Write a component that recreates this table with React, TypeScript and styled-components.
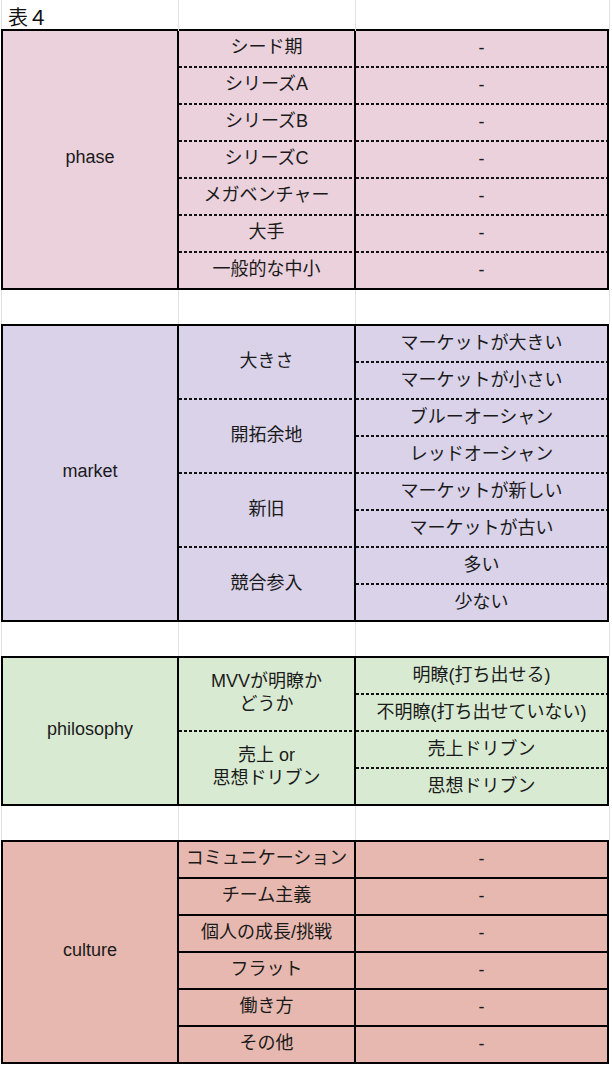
import React from 'react'
import styled, { createGlobalStyle } from 'styled-components'

type Sep = 'dash' | 'solid'

type Group = {
  label: string
  items: string[]
}

type SectionData = {
  title: string
  color: string
  sep: Sep
  groups: Group[]
}

const sections: SectionData[] = [
  {
    title: 'phase',
    color: '#ead1dc',
    sep: 'dash',
    groups: [
      'シード期',
      'シリーズA',
      'シリーズB',
      'シリーズC',
      'メガベンチャー',
      '大手',
      '一般的な中小',
    ].map((label) => ({ label, items: ['-'] })),
  },
  {
    title: 'market',
    color: '#d9d2e9',
    sep: 'dash',
    groups: [
      { label: '大きさ', items: ['マーケットが大きい', 'マーケットが小さい'] },
      { label: '開拓余地', items: ['ブルーオーシャン', 'レッドオーシャン'] },
      { label: '新旧', items: ['マーケットが新しい', 'マーケットが古い'] },
      { label: '競合参入', items: ['多い', '少ない'] },
    ],
  },
  {
    title: 'philosophy',
    color: '#d9ead3',
    sep: 'dash',
    groups: [
      { label: 'MVVが明瞭か\nどうか', items: ['明瞭(打ち出せる)', '不明瞭(打ち出せていない)'] },
      { label: '売上 or\n思想ドリブン', items: ['売上ドリブン', '思想ドリブン'] },
    ],
  },
  {
    title: 'culture',
    color: '#e6b8af',
    sep: 'solid',
    groups: [
      'コミュニケーション',
      'チーム主義',
      '個人の成長/挑戦',
      'フラット',
      '働き方',
      'その他',
    ].map((label) => ({ label, items: ['-'] })),
  },
]

const GlobalStyle = createGlobalStyle`
  html, body {
    margin: 0;
    padding: 0;
    background: #fff;
  }
  body {
    font-family: "Liberation Sans", "Noto Sans CJK JP", sans-serif;
    color: #1a1a1a;
  }
`

const App = () => {
  return (
    <Page>
      <GlobalStyle />
      <BlankRow $height={29}>
        <BlankCell>
          <SheetTitle>表４</SheetTitle>
        </BlankCell>
        <BlankCell />
        <BlankCell />
      </BlankRow>
      {sections.map((s, i) => (
        <React.Fragment key={s.title}>
          {i > 0 && (
            <BlankRow $height={34}>
              <BlankCell />
              <BlankCell />
              <BlankCell />
            </BlankRow>
          )}
          <Section data={s} />
        </React.Fragment>
      ))}
    </Page>
  )
}

const Section = ({ data }: { data: SectionData }) => {
  const rows = data.groups.reduce((n, g) => n + g.items.length, 0)
  let row = 1
  return (
    <Block $bg={data.color} $rows={rows}>
      <TitleCell style={{ gridRow: `1 / span ${rows}` }}>{data.title}</TitleCell>
      {data.groups.map((g, gi) => {
        const start = row
        row += g.items.length
        return (
          <React.Fragment key={gi}>
            <Cell
              $col={2}
              $sep={gi > 0 ? data.sep : undefined}
              style={{ gridRow: `${start} / span ${g.items.length}` }}
            >
              <Label>{g.label}</Label>
            </Cell>
            {g.items.map((it, ii) => (
              <Cell
                key={ii}
                $col={3}
                $sep={start + ii > 1 ? data.sep : undefined}
                style={{ gridRow: `${start + ii}` }}
              >
                {it}
              </Cell>
            ))}
          </React.Fragment>
        )
      })}
    </Block>
  )
}

export default App

const Page = styled.div`
  width: 612px;
  overflow: hidden;
`

const BlankRow = styled.div<{ $height: number }>`
  display: grid;
  grid-template-columns: 177px 177px 254px 4px;
  height: ${(p) => p.$height}px;
  margin-left: 1px;
  border-left: 1px solid #e1e1e1;
`

const BlankCell = styled.div`
  border-right: 1px solid #e1e1e1;
  display: flex;
  align-items: center;
`

const SheetTitle = styled.span`
  font-size: 20px;
  padding-left: 6px;
  padding-top: 2px;
  font-family: "Noto Sans CJK JP", sans-serif;
  color: #111;
`

const Block = styled.div<{ $bg: string; $rows: number }>`
  display: grid;
  width: 608px;
  box-sizing: border-box;
  margin-left: 1px;
  grid-template-columns: 174px 177px 253px;
  grid-template-rows: 35px repeat(${(p) => p.$rows - 1}, 37px);
  background: ${(p) => p.$bg};
  border: 2px solid #000;
`

const TitleCell = styled.div`
  grid-column: 1;
  display: flex;
  align-items: center;
  justify-content: center;
  font-size: 18px;
  padding-bottom: 4px;
`

const dashed = `
  background-image: repeating-linear-gradient(90deg, #111 0 3px, transparent 3px 5px);
  background-size: 100% 2px;
  background-repeat: no-repeat;
  background-position: 0 0;
  padding-top: 2px;
`

const Cell = styled.div<{ $col: number; $sep?: Sep }>`
  grid-column: ${(p) => p.$col};
  box-sizing: border-box;
  border-left: 2px solid #000;
  display: flex;
  align-items: center;
  justify-content: center;
  text-align: center;
  font-size: 18px;
  line-height: 23px;
  white-space: pre-line;
  ${(p) => (p.$sep === 'dash' ? dashed : '')}
  ${(p) => (p.$sep === 'solid' ? 'border-top: 2px solid #000;' : '')}
`

const Label = styled.span`
  display: block;
  padding-bottom: 2px;
`
